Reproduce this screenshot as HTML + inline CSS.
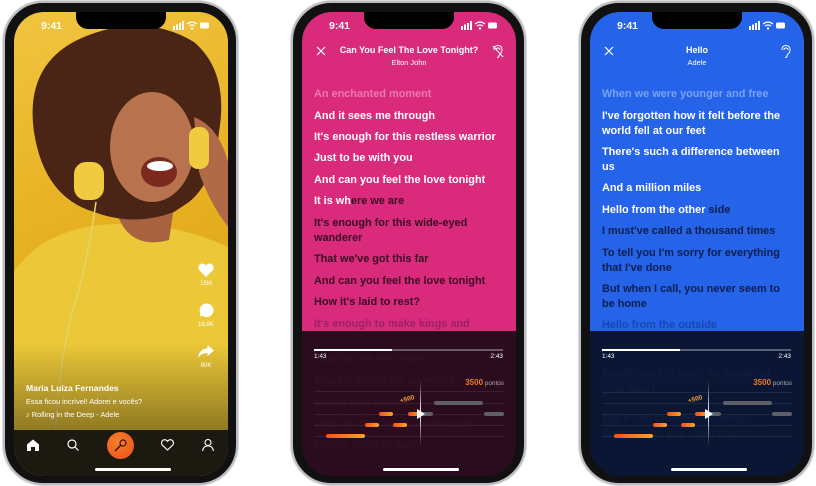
<!DOCTYPE html>
<html><head><meta charset="utf-8"><style>
*{margin:0;padding:0;box-sizing:border-box}
body{width:816px;height:486px;background:#fff;position:relative;overflow:hidden;font-family:"Liberation Sans",sans-serif}
.ph{position:absolute;top:1px;width:235px;height:484px;border-radius:40px;background:#111;border:2px solid #b9bcc0;box-shadow:0 0 0 1px #d8dadc}
.sc{position:absolute;left:9px;top:9px;width:214px;height:464px;border-radius:30px;overflow:hidden}
.notch{position:absolute;left:62px;top:0;width:90px;height:17px;background:#000;border-radius:0 0 12px 12px;z-index:5}
.ab{position:absolute}
.st{position:absolute;top:8px;left:27px;color:#fff;font-size:10.5px;font-weight:bold;z-index:6}
.sig{position:absolute;top:9px;right:19px;z-index:6}
.ly{position:absolute;left:12px;width:200px;font-size:10.9px;font-weight:bold;line-height:15px;color:#fff;white-space:nowrap}
.hb{position:absolute;left:81px;width:76px;height:3px;border-radius:2px;background:#fff;top:456px}
.lane{position:absolute;left:12px;width:190px;height:1px;background:rgba(255,255,255,.08)}
.n{position:absolute;height:4px;border-radius:2px;background:linear-gradient(90deg,#f0501e,#f7a52a)}
.g{position:absolute;height:4px;border-radius:2px;background:#5f6066}
</style></head><body>

<!-- LEFT PHONE -->
<div class="ph" style="left:3px">
<div class="sc" style="background:linear-gradient(160deg,#f1c440 0%,#e6b020 45%,#d79a18 100%)">
  <svg class="ab" style="left:0;top:0" width="214" height="464">
    <defs><linearGradient id="fd" x1="0" y1="0" x2="0" y2="1"><stop offset="0" stop-color="#000" stop-opacity="0"/><stop offset="1" stop-color="#000" stop-opacity=".4"/></linearGradient></defs>
    <path d="M0 260 Q30 215 100 212 Q160 210 214 235 L214 430 L0 430 Z" fill="#ecc838"/>
    <path d="M100 190 Q110 240 155 228 L160 195 Z" fill="#a9623f"/>
    <path d="M20 120 Q10 50 70 25 Q130 0 180 30 Q215 60 205 120 Q200 170 175 190 L160 200 Q120 215 80 200 Q30 185 20 120Z" fill="#4a2414"/>
    <ellipse cx="138" cy="135" rx="42" ry="55" fill="#b8724d"/>
    <ellipse cx="145" cy="160" rx="18" ry="15" fill="#7d2a1e"/>
    <ellipse cx="146" cy="154" rx="13" ry="5" fill="#fff"/>
    <path d="M180 105 Q205 115 214 150 L214 215 Q195 190 185 160Z" fill="#b06a47"/>
    <rect x="60" y="150" width="30" height="38" rx="12" fill="#f0cb3f"/>
    <rect x="175" y="115" width="20" height="42" rx="9" fill="#f0cb3f"/>
    <path d="M82 190 Q72 260 58 300 Q40 380 42 430" stroke="#e6d36a" stroke-width="1.5" fill="none"/>
    <rect x="0" y="330" width="214" height="90" fill="url(#fd)"/>
  </svg>
  <div class="notch"></div>
  <div class="st">9:41</div>
  <svg class="sig" width="36" height="9"><rect x="0" y="5" width="2" height="4" fill="#fff"/><rect x="3" y="3.5" width="2" height="5.5" fill="#fff"/><rect x="6" y="2" width="2" height="7" fill="#fff"/><rect x="9" y="0" width="2" height="9" fill="#fff"/><path d="M14 3 Q19 -1 24 3 M16 5 Q19 3 22 5" stroke="#fff" stroke-width="1.3" fill="none"/><circle cx="19" cy="7.5" r="1.2" fill="#fff"/><rect x="27" y="1.5" width="9" height="6" rx="1.5" fill="#fff"/></svg>
  <svg class="ab" style="left:184px;top:251px" width="16" height="14"><path d="M8 14 L1.5 7.5 Q-1 4 2 1.3 Q5 -0.8 8 2.5 Q11 -0.8 14 1.3 Q17 4 14.5 7.5 Z" fill="#fff"/></svg>
  <div class="ab" style="left:176px;top:269px;width:32px;text-align:center;color:#fff;font-size:6px">15M</div>
  <svg class="ab" style="left:185px;top:291px" width="15" height="15"><path d="M7.5 0.5 A7 6.8 0 1 1 3 12.5 L0.5 14 L1.5 10.5 A7 6.8 0 0 1 7.5 0.5Z" fill="#fff"/></svg>
  <div class="ab" style="left:176px;top:310px;width:32px;text-align:center;color:#fff;font-size:6px">18.9K</div>
  <svg class="ab" style="left:184px;top:333px" width="16" height="14"><path d="M16 5.5 L9.5 0 L9.5 3.2 Q1 4 0 13 Q3 8 9.5 8 L9.5 11 Z" fill="#fff"/></svg>
  <div class="ab" style="left:176px;top:351px;width:32px;text-align:center;color:#fff;font-size:6px">80K</div>
  <div class="ab" style="left:12px;top:371px;color:#fff;font-size:8.6px;font-weight:bold">Maria Luiza Fernandes</div>
  <div class="ab" style="left:12px;top:385px;color:#fff;font-size:7.4px">Essa ficou incrível! Adorei e vocês?</div>
  <div class="ab" style="left:12px;top:398px;color:#fff;font-size:7.4px">♪ Rolling in the Deep - Adele</div>
  <div class="ab" style="left:0;top:418px;width:214px;height:46px;background:#1c1a10"></div>
  <svg class="ab" style="left:13px;top:427px" width="12" height="12"><path d="M0 5.5 L6 0.5 L12 5.5 L12 12 L8 12 L8 8 L4 8 L4 12 L0 12Z" fill="#fff"/></svg>
  <svg class="ab" style="left:53px;top:427px" width="12" height="12"><circle cx="5" cy="5" r="4" stroke="#fff" stroke-width="1.2" fill="none"/><path d="M8 8 L11.5 11.5" stroke="#fff" stroke-width="1.2"/></svg>
  <div class="ab" style="left:93px;top:420px;width:27px;height:27px;border-radius:50%;background:radial-gradient(circle at 40% 35%,#f57f2a,#ec4f1c)"></div>
  <svg class="ab" style="left:100px;top:427px" width="13" height="13"><circle cx="9" cy="4" r="3" stroke="#3a1405" stroke-width="1.2" fill="none"/><path d="M7 6 L1 12" stroke="#3a1405" stroke-width="1.5"/></svg>
  <svg class="ab" style="left:147px;top:427px" width="13" height="12"><path d="M6.5 11 L1.2 6 Q-0.5 3 2 1.2 Q4.5 -0.3 6.5 2.3 Q8.5 -0.3 11 1.2 Q13.5 3 11.8 6 Z" stroke="#fff" stroke-width="1.1" fill="none"/></svg>
  <svg class="ab" style="left:188px;top:427px" width="12" height="12"><circle cx="6" cy="3.5" r="3" stroke="#fff" stroke-width="1.1" fill="none"/><path d="M0.7 12 Q1 7 6 7 Q11 7 11.3 12" stroke="#fff" stroke-width="1.1" fill="none"/></svg>
  <div class="hb" style="top:456px"></div>
</div></div>

<!-- MIDDLE PHONE -->
<div class="ph" style="left:291px">
<div class="sc" style="background:#2b0c1f">
  <div class="ab" style="left:0;top:0;width:214px;height:319px;background:#d92a7b"></div>
  <div class="notch"></div>
  <div class="st">9:41</div>
  <svg class="sig" width="36" height="9"><rect x="0" y="5" width="2" height="4" fill="#fff"/><rect x="3" y="3.5" width="2" height="5.5" fill="#fff"/><rect x="6" y="2" width="2" height="7" fill="#fff"/><rect x="9" y="0" width="2" height="9" fill="#fff"/><path d="M14 3 Q19 -1 24 3 M16 5 Q19 3 22 5" stroke="#fff" stroke-width="1.3" fill="none"/><circle cx="19" cy="7.5" r="1.2" fill="#fff"/><rect x="27" y="1.5" width="9" height="6" rx="1.5" fill="#fff"/></svg>
  <svg class="ab" style="left:14px;top:34px" width="10" height="10"><path d="M1 1 L9 9 M9 1 L1 9" stroke="#fff" stroke-width="1.2"/></svg>
  <div class="ab" style="left:20px;top:33px;width:174px;text-align:center;color:#fff;font-size:9px;font-weight:bold">Can You Feel The Love Tonight?</div>
  <div class="ab" style="left:30px;top:46px;width:154px;text-align:center;color:#fff;font-size:7.4px">Elton John</div>
  <svg class="ab" style="left:190px;top:33px" width="12" height="13"><path d="M2 5 Q2 0.5 6 0.5 Q10 0.5 10 5 Q10 7.5 8 9 Q7 10 7 11.5 Q6.5 12.5 5 12.5 M4 5 Q4 3 6 3 Q8 3 8 5 M1 1 L11 12" stroke="#fff" stroke-width="1" fill="none"/></svg>
  <div class="ly" style="top:75px;color:#ea7ab0">An enchanted moment</div>
  <div class="ly" style="top:97px">And it sees me through</div>
  <div class="ly" style="top:118px">It's enough for this restless warrior</div>
  <div class="ly" style="top:139px">Just to be with you</div>
  <div class="ly" style="top:161px">And can you feel the love tonight</div>
  <div class="ly" style="top:182px">It is wh<span style="color:#3a0c24">ere we are</span></div>
  <div class="ly" style="top:204px;color:#3a0c24">It's enough for this wide-eyed<br>wanderer</div>
  <div class="ly" style="top:240px;color:#3a0c24">That we've got this far</div>
  <div class="ly" style="top:262px;color:#3a0c24">And can you feel the love tonight</div>
  <div class="ly" style="top:283px;color:#3a0c24">How it's laid to rest?</div>
  <div class="ly" style="top:305px;color:#9c2262">It's enough to make kings and</div>
  <div class="ly" style="top:340px;color:#301023">Wander the very least</div>
  <div class="ly" style="top:362px;color:#301023">There's a time for everyone</div>
  <div class="ly" style="top:384px;color:#301023">If they only learn</div>
  <div class="ly" style="top:405px;color:#301023">That the twisting kaleidoscope</div>
  <div class="ly" style="top:426px;color:#301023">Moves us all in turn</div>
  <div class="ab" style="left:12px;top:337px;width:189px;height:2px;background:#6b5a64"></div>
  <div class="ab" style="left:12px;top:337px;width:78px;height:2px;background:#fff"></div>
  <div class="ab" style="left:12px;top:341px;color:#fff;font-size:6.4px">1:43</div>
  <div class="ab" style="left:180px;top:341px;width:21px;text-align:right;color:#fff;font-size:6.4px">2:43</div>
  <div class="ab" style="left:120px;top:366px;width:82px;text-align:right;font-size:6.4px;color:#aaa"><b style="color:#f07a25;font-size:8px">3500</b> pontos</div>
  <div class="lane" style="top:379px"></div><div class="lane" style="top:391px"></div><div class="lane" style="top:402px"></div><div class="lane" style="top:413px"></div><div class="lane" style="top:424px"></div>
  <div class="ab" style="left:118px;top:368px;width:1px;height:66px;background:linear-gradient(#fff0,#fff,#fff0)"></div>
  <div class="g" style="left:132px;top:389px;width:49px"></div>
  <div class="g" style="left:115px;top:400px;width:16px"></div>
  <div class="g" style="left:182px;top:400px;width:20px"></div>
  <div class="n" style="left:77px;top:400px;width:14px"></div>
  <div class="n" style="left:106px;top:400px;width:14px"></div>
  <svg class="ab" style="left:115px;top:397px" width="8" height="10"><path d="M0 0 L8 5 L0 10Z" fill="#fff"/></svg>
  <div class="n" style="left:63px;top:411px;width:14px"></div>
  <div class="n" style="left:91px;top:411px;width:14px"></div>
  <div class="n" style="left:24px;top:422px;width:39px"></div>
  <div class="ab" style="left:98px;top:384px;color:#f0a030;font-size:6.5px;font-weight:bold;transform:rotate(-15deg)">+500</div>
  <div class="hb"></div>
</div></div>

<!-- RIGHT PHONE -->
<div class="ph" style="left:579px">
<div class="sc" style="background:#0a1633">
  <div class="ab" style="left:0;top:0;width:214px;height:319px;background:#2563e8"></div>
  <div class="notch"></div>
  <div class="st">9:41</div>
  <svg class="sig" width="36" height="9"><rect x="0" y="5" width="2" height="4" fill="#fff"/><rect x="3" y="3.5" width="2" height="5.5" fill="#fff"/><rect x="6" y="2" width="2" height="7" fill="#fff"/><rect x="9" y="0" width="2" height="9" fill="#fff"/><path d="M14 3 Q19 -1 24 3 M16 5 Q19 3 22 5" stroke="#fff" stroke-width="1.3" fill="none"/><circle cx="19" cy="7.5" r="1.2" fill="#fff"/><rect x="27" y="1.5" width="9" height="6" rx="1.5" fill="#fff"/></svg>
  <svg class="ab" style="left:14px;top:34px" width="10" height="10"><path d="M1 1 L9 9 M9 1 L1 9" stroke="#fff" stroke-width="1.2"/></svg>
  <div class="ab" style="left:30px;top:33px;width:154px;text-align:center;color:#fff;font-size:9px;font-weight:bold">Hello</div>
  <div class="ab" style="left:30px;top:46px;width:154px;text-align:center;color:#fff;font-size:7.4px">Adele</div>
  <svg class="ab" style="left:190px;top:33px" width="12" height="13"><path d="M2 5 Q2 0.5 6 0.5 Q10 0.5 10 5 Q10 7.5 8 9 Q7 10 7 11.5 Q6.5 12.5 5 12.5 M4 5 Q4 3 6 3 Q8 3 8 5" stroke="#fff" stroke-width="1" fill="none"/></svg>
  <div class="ly" style="top:75px;color:#7aa2f2">When we were younger and free</div>
  <div class="ly" style="top:97px">I've forgotten how it felt before the<br>world fell at our feet</div>
  <div class="ly" style="top:133px">There's such a difference between<br>us</div>
  <div class="ly" style="top:169px">And a million miles</div>
  <div class="ly" style="top:191px">Hello from the other <span style="color:#0d1f4e">side</span></div>
  <div class="ly" style="top:212px;color:#0d1f4e">I must've called a thousand times</div>
  <div class="ly" style="top:234px;color:#0d1f4e">To tell you I'm sorry for everything<br>that I've done</div>
  <div class="ly" style="top:270px;color:#0d1f4e">But when I call, you never seem to<br>be home</div>
  <div class="ly" style="top:306px;color:#1747b0">Hello from the outside</div>
  <div class="ly" style="top:355px;color:#0f1c3a">To tell you I'm sorry for breaking<br>your heart</div>
  <div class="ly" style="top:400px;color:#0f1c3a">But it don't matter, it clearly<br>doesn't tear you apart anymore</div>
  <div class="ab" style="left:12px;top:337px;width:189px;height:2px;background:#5a6172"></div>
  <div class="ab" style="left:12px;top:337px;width:78px;height:2px;background:#fff"></div>
  <div class="ab" style="left:12px;top:341px;color:#fff;font-size:6.4px">1:43</div>
  <div class="ab" style="left:180px;top:341px;width:21px;text-align:right;color:#fff;font-size:6.4px">2:43</div>
  <div class="ab" style="left:120px;top:366px;width:82px;text-align:right;font-size:6.4px;color:#aaa"><b style="color:#f07a25;font-size:8px">3500</b> pontos</div>
  <div class="lane" style="top:380px"></div><div class="lane" style="top:391px"></div><div class="lane" style="top:402px"></div><div class="lane" style="top:413px"></div><div class="lane" style="top:424px"></div>
  <div class="ab" style="left:118px;top:368px;width:1px;height:66px;background:linear-gradient(#fff0,#fff,#fff0)"></div>
  <div class="g" style="left:133px;top:389px;width:49px"></div>
  <div class="g" style="left:115px;top:400px;width:16px"></div>
  <div class="g" style="left:182px;top:400px;width:20px"></div>
  <div class="n" style="left:77px;top:400px;width:14px"></div>
  <div class="n" style="left:105px;top:400px;width:14px"></div>
  <svg class="ab" style="left:115px;top:397px" width="8" height="10"><path d="M0 0 L8 5 L0 10Z" fill="#fff"/></svg>
  <div class="n" style="left:63px;top:411px;width:14px"></div>
  <div class="n" style="left:91px;top:411px;width:14px"></div>
  <div class="n" style="left:24px;top:422px;width:39px"></div>
  <div class="ab" style="left:98px;top:384px;color:#f0a030;font-size:6.5px;font-weight:bold;transform:rotate(-15deg)">+500</div>
  <div class="hb"></div>
</div></div>

</body></html>
